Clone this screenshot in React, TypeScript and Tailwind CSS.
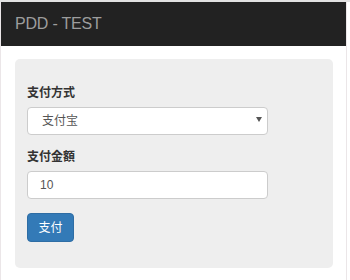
export default function App() {
  return (
    <div className="h-[280px] w-[350px] bg-white font-['Liberation_Sans','Noto_Sans_CJK_JP',sans-serif] text-[#333]">
      <div className="h-[2px] w-full bg-[#e2e2e2]" />
      <div className="flex h-[278px]">
        <div className="flex w-[347px] flex-col border-l border-r border-[#ebe6e8]">
          {/* navbar */}
          <div className="flex h-[44px] items-center bg-[#222] pl-[14px]">
            <span className="text-[16px] leading-none tracking-[-0.2px] text-[#9d9d9d]">PDD - TEST</span>
          </div>

          {/* form panel */}
          <div className="px-[14px] pt-[13px]">
            <div className="flex w-[318px] flex-col rounded-[5px] bg-[#eee] px-[12px] pb-[26px] pt-[26px]">
              <label className="text-[12px] font-bold leading-[17px] text-[#333]">支付方式</label>
              <div className="mt-[5px] flex h-[28px] w-[241px] items-center justify-between rounded-[4px] border border-[#ccc] bg-white pl-[14px] pr-[5px]">
                <span className="text-[12px] text-[#555]">支付宝</span>
                <svg width="6" height="5" viewBox="0 0 6 5" className="mb-[3px]">
                  <polygon points="0,0 6,0 3,5" fill="#555" />
                </svg>
              </div>

              <label className="mt-[14px] text-[12px] font-bold leading-[17px] text-[#333]">支付金額</label>
              <div className="mt-[5px] flex h-[28px] w-[241px] items-center rounded-[4px] border border-[#ccc] bg-white pl-[12px]">
                <span className="text-[12px] text-[#555]">10</span>
              </div>

              <button className="mt-[14px] flex h-[29px] w-[47px] items-center justify-center rounded-[4px] border border-[#2e6da4] bg-[#337ab7] text-[12px] text-white">
                支付
              </button>
            </div>
          </div>
        </div>
      </div>
    </div>
  );
}
